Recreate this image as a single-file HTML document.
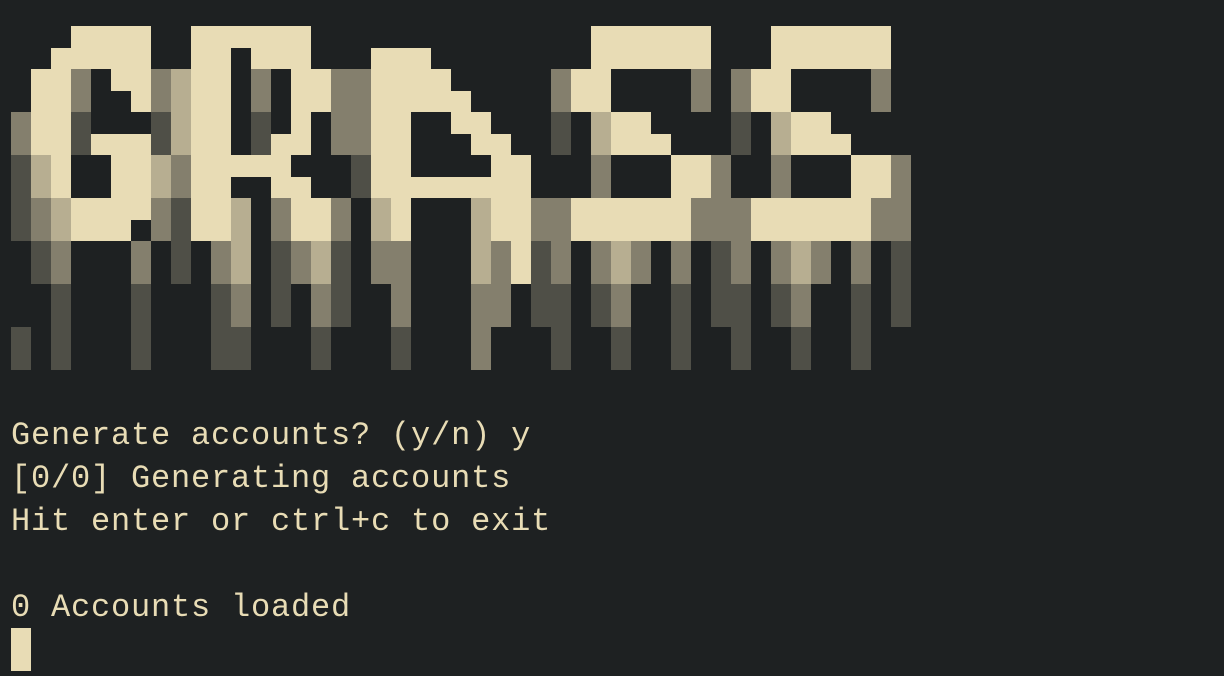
<!DOCTYPE html>
<html><head><meta charset="utf-8"><style>
html,body{margin:0;padding:0;background:#1e2122;width:1224px;height:676px;overflow:hidden}
#art{position:absolute;left:11px;top:26px}
#art div{position:absolute;width:20px;height:21.5px}
.t{position:absolute;left:11px;font-family:"Liberation Mono",monospace;font-size:32px;letter-spacing:0.8px;color:#e8dcb5;line-height:43px;white-space:pre}
#cur{position:absolute;left:11px;top:628px;width:20px;height:43px;background:#e8dcb5}
</style></head><body>
<div id="art"></div>
<div class="t" style="top:414px">Generate accounts? (y/n) y</div>
<div class="t" style="top:457px">[0/0] Generating accounts</div>
<div class="t" style="top:500px">Hit enter or ctrl+c to exit</div>
<div class="t" style="top:586px">0 Accounts loaded</div>
<div id="cur"></div>
<script>
var rows=[
"...CCCC..CCCCCC..............CCCCCC...CCCCCC.",
"..CCCCC..CC.CCC...CCC........CCCCCC...CCCCCC.",
".CCM.CCMLCC.M.CCMMCCCC.....MCC....M.MCC....M.",
".CCM..CMLCC.M.CCMMCCCCC....MCC....M.MCC....M.",
"MCCD...DLCC.D.C.MMCC..CC...D.LCC....D.LCC....",
"MCCDCCCDLCC.DCC.MMCC...CC..D.LCCC...D.LCCC...",
"DLC..CCLMCCCCC...DCC....CC...M...CCM..M...CCM",
"DLC..CCLMCC..CC..DCCCCCCCC...M...CCM..M...CCM",
"DMLCCCCMDCCL.MCCM.LC...LCCMMCCCCCCMMMCCCCCCMM",
"DMLCCC.MDCCL.MCCM.LC...LCCMMCCCCCCMMMCCCCCCMM",
".DM...M.D.ML.DMLD.MM...LMCDM.MLM.M.DM.MLM.M.D",
".DM...M.D.ML.DMLD.MM...LMCDM.MLM.M.DM.MLM.M.D",
"..D...D...DM.D.MD..M...MM.DD.DM..D.DD.DM..D.D",
"..D...D...DM.D.MD..M...MM.DD.DM..D.DD.DM..D.D",
"D.D...D...DD...D...D...M...D..D..D..D..D..D..",
"D.D...D...DD...D...D...M...D..D..D..D..D..D.."];
var col={C:"#e8dcb5",L:"#b7ae91",M:"#847f6d",D:"#4f4f47"};
var h="";
for(var r=0;r<rows.length;r++)for(var c=0;c<rows[r].length;c++){var k=rows[r][c];if(col[k])h+='<div style="left:'+(c*20)+'px;top:'+(r*21.5)+'px;background:'+col[k]+'"></div>';}
document.getElementById("art").innerHTML=h;
</script>
</body></html>
